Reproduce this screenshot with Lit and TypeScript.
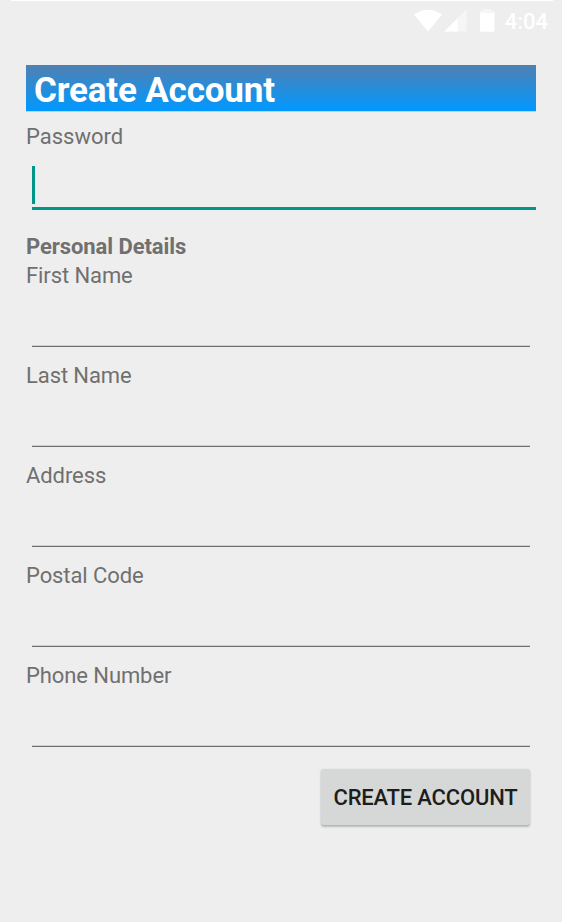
import { LitElement, html, css } from "lit";
import { customElement, property } from "lit/decorators.js";

@customElement("status-bar")
class StatusBar extends LitElement {
  static styles = css`
    :host { display: block; height: 65px; }
    .edge { height: 1px; margin: 0 9px 0 11px; background: #fff; }
    .row { display: flex; justify-content: flex-end; align-items: flex-start; padding: 5px 14px 0 0; }
    svg { display: block; flex: none; width: 86px; height: 30px; }
    .time { font-size: 22px; font-weight: 500; line-height: 32px; color: #fff; margin-left: 5px; }
  `;

  render() {
    return html`
      <div class="edge"></div>
      <div class="row">
        <svg viewBox="0 0 86 30">
          <path d="M0 8.500Q14 -1 28 8.500L14 25.500Z" fill="#fff" />
          <path d="M30.500 25.500L52.500 3V25.500Z" fill="#f6f6f6" />
          <path d="M30.500 25.500L43.500 12.300V25.500Z" fill="#fff" />
          <path d="M66 6Q66 5 67 5H69V3H77V5H79.500Q80.500 5 80.500 6V24.800Q80.500 25.800 79.500 25.800H67Q66 25.800 66 24.800Z" fill="#fff" />
          <path d="M66 5H69V3H77V5H80.500V7H66Z" fill="#f6f6f6" />
        </svg>
        <span class="time">4:04</span>
      </div>
    `;
  }
}

@customElement("form-field")
class FormField extends LitElement {
  @property() label = "";
  @property({ type: Boolean, reflect: true }) focused = false;

  static styles = css`
    :host { display: block; height: 100px; }
    .label { line-height: 30px; height: 30px; letter-spacing: -0.09px; }
    .input { box-sizing: border-box; height: 56px; margin: 0 6px; border-bottom: 1px solid #707070; box-shadow: inset 0 -1px #cfcfcf; }
    :host([focused]) { height: 109px; }
    :host([focused]) .label { letter-spacing: 0; }
    :host([focused]) .input { height: 58px; margin-right: 0; padding-top: 14px; border-bottom: 3px solid #009688; box-shadow: none; }
    .caret { width: 3px; height: 38px; background: #009688; }
  `;

  render() {
    return html`
      <div class="label">${this.label}</div>
      <div class="input">${this.focused ? html`<div class="caret"></div>` : null}</div>
    `;
  }
}

@customElement("app-root")
class AppRoot extends LitElement {
  static styles = css`
    :host { display: block; box-sizing: border-box; height: 922px; overflow: hidden; background: #eee; color: #707070; font: 400 22px Roboto, sans-serif; }
    .form { display: flex; flex-direction: column; margin: 0 26px; }
    .title { margin: 0 0 11px; height: 46px; box-sizing: border-box; padding-left: 8px; line-height: 51px; font-size: 35px; font-weight: 700; letter-spacing: -0.17px; color: #fff; background: linear-gradient(#5080b2, #0099ff); box-shadow: 0 1px #a9d7f8; }
    .section { margin: 0; padding-top: 2px; font-size: 22px; font-weight: 700; line-height: 28px; letter-spacing: -0.07px; }
    .submit { align-self: flex-end; box-sizing: border-box; width: 209px; height: 56px; margin: 8px 6px 0 0; padding: 0; border: 0; border-radius: 3px; background: #d6d8d7; color: #1d1d1d; font: 500 22px/58px Roboto, sans-serif; letter-spacing: -0.18px; white-space: nowrap; box-shadow: 0 2px 2px rgba(0, 0, 0, 0.22), 0 0 2px rgba(0, 0, 0, 0.1); }
  `;

  private fields = ["First Name", "Last Name", "Address", "Postal Code", "Phone Number"];

  render() {
    return html`
      <status-bar></status-bar>
      <div class="form">
        <h1 class="title">Create Account</h1>
        <form-field label="Password" focused></form-field>
        <h2 class="section">Personal Details</h2>
        ${this.fields.map((label) => html`<form-field label=${label}></form-field>`)}
        <button class="submit">CREATE ACCOUNT</button>
      </div>
    `;
  }
}
